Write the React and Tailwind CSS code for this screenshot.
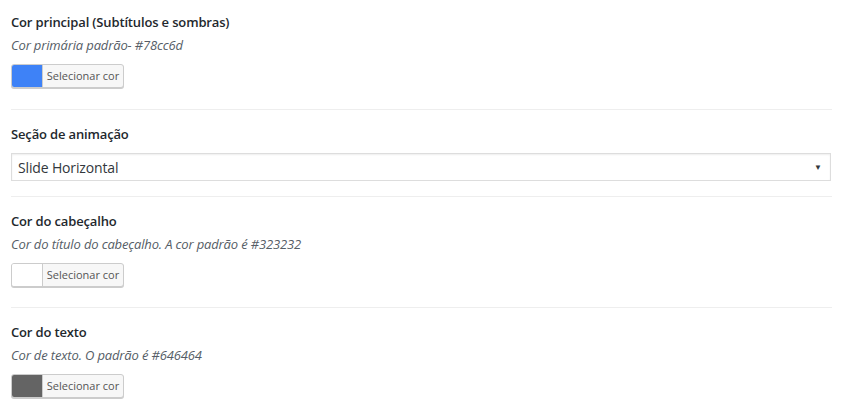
function ColorButton({ color }) {
  return (
    <button
      type="button"
      className="flex h-6 w-[113px] overflow-hidden rounded-[3px] border border-[#cccccc] bg-[#f7f7f7] p-0 shadow-[0_1px_0_#cccccc]"
    >
      <span className="h-full w-[31px] border-r border-[#cccccc]" style={{ backgroundColor: color }} />
      <span className="flex-1 pt-[3px] text-center text-[11px] leading-4 text-[#555555]">Selecionar cor</span>
    </button>
  );
}

function ColorSection({ title, desc, color, first }) {
  return (
    <section className={`border-b border-[#eeeeee] ${first ? 'pb-[21px] pt-3' : 'pb-[20px] pt-[14px]'}`}>
      <h3 className="text-[13px] font-semibold leading-5 tracking-[-0.15px] text-[#23282d]">{title}</h3>
      <p className="mt-[3px] text-[13px] italic leading-5 tracking-[-0.15px] text-[#555d66]">{desc}</p>
      <div className="mt-[9px]">
        <ColorButton color={color} />
      </div>
    </section>
  );
}

export default function App() {
  return (
    <div className="min-h-[409px] w-[843px] bg-white px-[11px] font-['Open_Sans',sans-serif]">
      <ColorSection
        first
        title="Cor principal (Subtítulos e sombras)"
        desc="Cor primária padrão- #78cc6d"
        color="#3e82f7"
      />

      <section className="border-b border-[#eeeeee] pb-[15px] pt-[14px]">
        <h3 className="text-[13px] font-semibold leading-5 tracking-[-0.15px] text-[#23282d]">Seção de animação</h3>
        <div className="mt-[9px] flex h-7 w-[820px] items-center justify-between border border-[#dddddd] bg-white pl-[6px] pr-[8px] shadow-[inset_0_1px_2px_rgba(0,0,0,0.07)]">
          <span className="text-[14px] tracking-[-0.15px] text-[#32373c]">Slide Horizontal</span>
          <span className="text-[8px] text-[#32373c]">▼</span>
        </div>
      </section>

      <ColorSection
        title="Cor do cabeçalho"
        desc="Cor do título do cabeçalho. A cor padrão é #323232"
        color="#ffffff"
      />
      <ColorSection
        title="Cor do texto"
        desc="Cor de texto. O padrão é #646464"
        color="#646464"
      />
    </div>
  );
}
